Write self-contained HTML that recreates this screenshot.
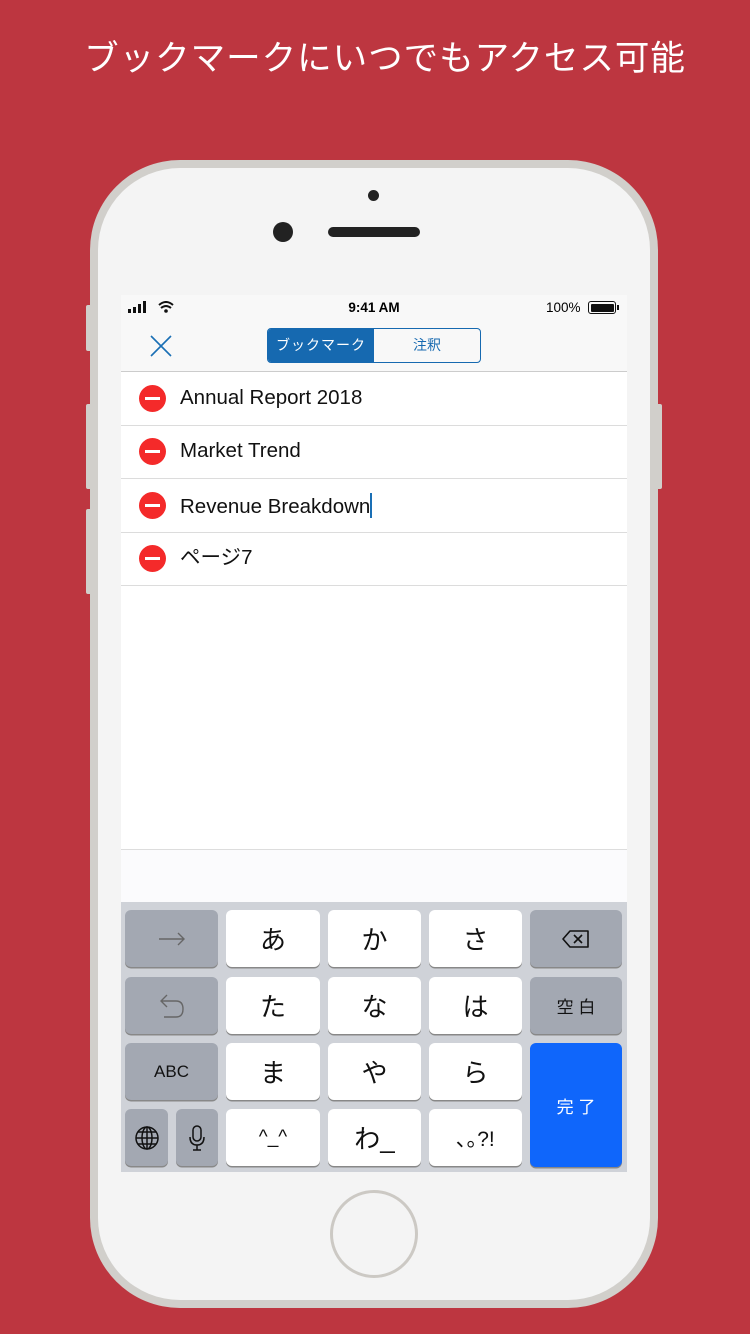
<!DOCTYPE html>
<html><head><meta charset="utf-8"><style>
*{margin:0;padding:0;box-sizing:border-box}
body{width:750px;height:1334px;background:#bd3640;position:relative;overflow:hidden;font-family:"Liberation Sans","Noto Sans CJK JP",sans-serif}
.title{position:absolute;top:30px;left:0;width:770px;text-align:center;color:#fff;font-size:34.5px;letter-spacing:1px}
.phone{position:absolute;left:90px;top:160px;width:568px;height:1148px;border-radius:90px;background:#d1cfcb}
.inner{position:absolute;left:98px;top:168px;width:552px;height:1132px;border-radius:82px;background:#f4f4f4}
.btn{position:absolute;background:#d1cfcb;width:6px;border-radius:2px}
.screen{position:absolute;left:121px;top:295px;width:506px;height:877px;background:#fff;overflow:hidden}
.abs{position:absolute}
.row{position:absolute;left:0;width:506px;height:54px;border-bottom:1px solid #dcdcdc;font-size:20.5px;color:#111}
.row .m{position:absolute;left:18px;top:13px;width:27px;height:27px;border-radius:50%;background:#f42a2a}
.row .m:after{content:"";position:absolute;left:6px;top:12px;width:15px;height:2.5px;background:#fff}
.row span{position:absolute;left:59px;top:14px;line-height:24px;height:24px}
.kb{position:absolute;left:0;top:607px;width:506px;height:270px;background:#cfd2d8}
.k{position:absolute;height:57px;border-radius:6px;background:#fff;box-shadow:0 1.5px 0 #888;font-size:26px;display:flex;align-items:center;justify-content:center;color:#111}
.g{background:#a3a8b2}
</style></head><body>
<div class="title">ブックマークにいつでもアクセス可能</div>
<div class="phone"></div>
<div class="btn" style="left:86px;top:305px;height:46px"></div>
<div class="btn" style="left:86px;top:404px;height:85px"></div>
<div class="btn" style="left:86px;top:509px;height:85px"></div>
<div class="btn" style="left:656px;top:404px;height:85px"></div>
<div class="inner"></div>
<div class="abs" style="left:368px;top:190px;width:11px;height:11px;border-radius:50%;background:#222"></div>
<div class="abs" style="left:273px;top:222px;width:20px;height:20px;border-radius:50%;background:#222"></div>
<div class="abs" style="left:328px;top:227px;width:92px;height:10px;border-radius:5px;background:#222"></div>
<div class="abs" style="left:330px;top:1190px;width:88px;height:88px;border-radius:50%;border:3px solid #ccc9c4"></div>
<div class="screen">
 <div class="abs" style="left:0;top:0;width:506px;height:77px;background:#f8f8f8;border-bottom:1px solid #ccc"></div>
 <svg class="abs" style="left:7px;top:6px" width="50" height="14"><rect x="0" y="8" width="3" height="4" fill="#111"/><rect x="5" y="6" width="3" height="6" fill="#111"/><rect x="10" y="3" width="3" height="9" fill="#111"/><rect x="15" y="0" width="3" height="12" fill="#111"/><path d="M31 4Q38 -2 45 4M33 7Q38 3 43 7" stroke="#111" stroke-width="2" fill="none"/><circle cx="38" cy="10" r="1.8" fill="#111"/></svg>
 <div class="abs" style="left:0;top:5px;width:506px;text-align:center;font-size:13.5px;font-weight:bold">9:41 AM</div>
 <div class="abs" style="left:425px;top:5px;font-size:13.5px">100%</div>
 <div class="abs" style="left:467px;top:6px;width:28px;height:13px;border:1.2px solid #111;border-radius:3px;padding:1.5px"><div style="background:#111;height:100%;border-radius:1px"></div></div>
 <div class="abs" style="left:496px;top:10px;width:2px;height:5px;background:#111"></div>
 <svg class="abs" style="left:29px;top:40px" width="22" height="22"><path d="M1 1L21 21M21 1L1 21" stroke="#1a6fb5" stroke-width="1.6"/></svg>
 <div class="abs" style="left:146px;top:33px;width:214px;height:35px;border:1.5px solid #1669b0;border-radius:4px;overflow:hidden;font-size:14px">
  <div style="position:absolute;left:0;top:0;width:106px;height:100%;background:#1669b0;color:#fff;text-align:center;line-height:32px;letter-spacing:1px">ブックマーク</div>
  <div style="position:absolute;left:106px;top:0;width:106px;height:100%;color:#1669b0;text-align:center;line-height:32px">注釈</div>
 </div>
 <div class="row" style="top:77px"><div class="m"></div><span>Annual Report 2018</span></div>
 <div class="row" style="top:130px"><div class="m"></div><span>Market Trend</span></div>
 <div class="row" style="top:184px"><div class="m"></div><span>Revenue Breakdown<b style="display:inline-block;width:2px;height:25px;background:#1a6fb5;vertical-align:-5px"></b></span></div>
 <div class="row" style="top:237px"><div class="m"></div><span>ページ7</span></div>
 <div class="abs" style="left:0;top:554px;width:506px;height:53px;background:#fbfbfd;border-top:1px solid #ddd"></div>
 <div class="kb">
  <div class="k g" style="left:4px;top:8px;width:93px"><svg width="28" height="14"><path d="M1 7H26M20 1L26 7L20 13" stroke="#666" stroke-width="1.4" fill="none"/></svg></div>
  <div class="k" style="left:105px;top:8px;width:94px">あ</div>
  <div class="k" style="left:207px;top:8px;width:93px">か</div>
  <div class="k" style="left:308px;top:8px;width:93px">さ</div>
  <div class="k g" style="left:409px;top:8px;width:92px"><svg width="30" height="20"><path d="M9 2H27V18H9L2 10Z" fill="none" stroke="#111" stroke-width="1.6" stroke-linejoin="round"/><path d="M13 6L21 14M21 6L13 14" stroke="#111" stroke-width="1.6"/></svg></div>
  <div class="k g" style="left:4px;top:75px;width:93px"><svg width="28" height="26"><path d="M9 2L3 8L9 14M3 8H18Q25 8 25 16Q25 24 18 24H6" stroke="#666" stroke-width="1.4" fill="none"/></svg></div>
  <div class="k" style="left:105px;top:75px;width:94px">た</div>
  <div class="k" style="left:207px;top:75px;width:93px">な</div>
  <div class="k" style="left:308px;top:75px;width:93px">は</div>
  <div class="k g" style="left:409px;top:75px;width:92px;font-size:17px">空 白</div>
  <div class="k g" style="left:4px;top:141px;width:93px;font-size:17px">ABC</div>
  <div class="k" style="left:105px;top:141px;width:94px">ま</div>
  <div class="k" style="left:207px;top:141px;width:93px">や</div>
  <div class="k" style="left:308px;top:141px;width:93px">ら</div>
  <div class="k" style="left:409px;top:141px;width:92px;height:124px;background:#0f66fb;color:#fff;font-size:17px">完 了</div>
  <div class="k g" style="left:4px;top:207px;width:43px"><svg width="26" height="26"><g stroke="#111" stroke-width="1.5" fill="none"><circle cx="13" cy="13" r="11"/><ellipse cx="13" cy="13" rx="5" ry="11"/><path d="M13 2V24M2 13H24M4 7H22M4 19H22"/></g></svg></div>
  <div class="k g" style="left:55px;top:207px;width:42px"><svg width="16" height="26"><g stroke="#111" stroke-width="1.5" fill="none"><rect x="4" y="1" width="8" height="15" rx="4"/><path d="M1 12Q1 20 8 20Q15 20 15 12M8 20V25M4 25H12"/></g></svg></div>
  <div class="k" style="left:105px;top:207px;width:94px;font-size:19px">^_^</div>
  <div class="k" style="left:207px;top:207px;width:93px">わ_</div>
  <div class="k" style="left:308px;top:207px;width:93px;font-size:21px">､｡?!</div>
 </div>
</div>
</body></html>
